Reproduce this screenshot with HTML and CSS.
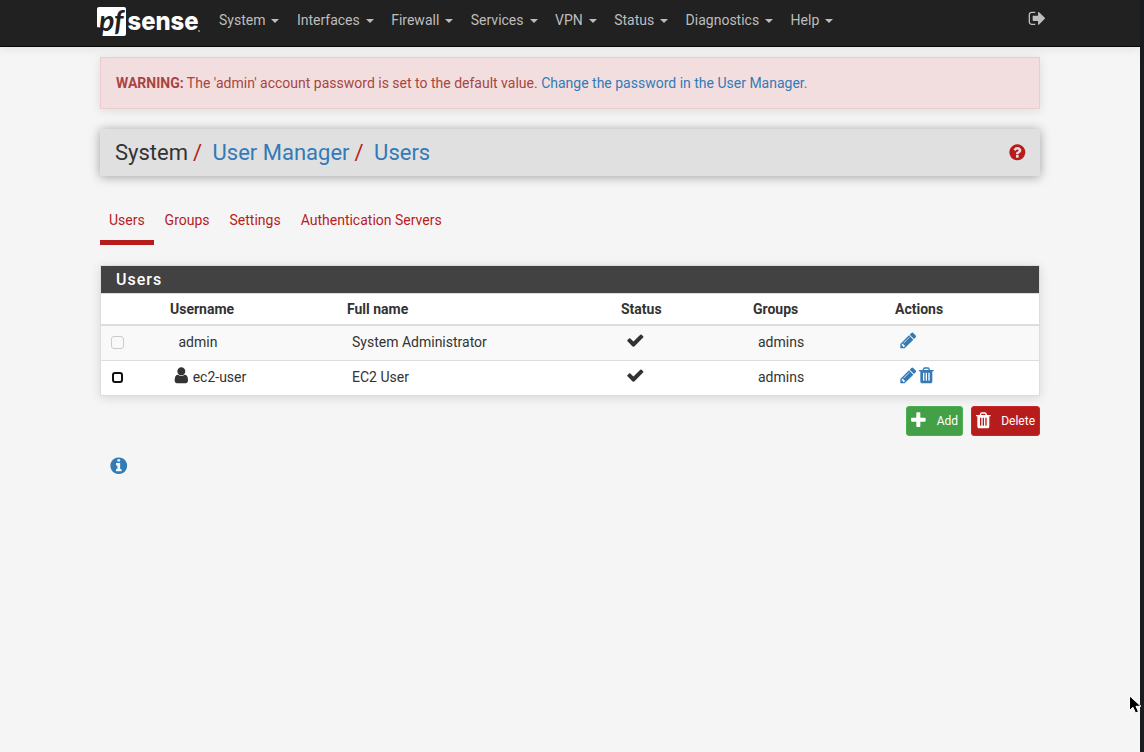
FILE: index.html
```html
<!DOCTYPE html>
<html lang="en">
<head>
<meta charset="utf-8">
<title>System: User Manager: Users</title>
<link rel="stylesheet" href="styles.css">
</head>
<body>
<svg class="sprite" aria-hidden="true">
  <symbol id="pencil" viewBox="0 0 1792 1792"><path d="M491 1536l91-91-235-235-91 91v107h128v128h107zm523-928q0-22-22-22-10 0-17 7l-542 542q-7 7-7 17 0 22 22 22 10 0 17-7l542-542q7-7 7-17zm-54-192l416 416-832 832h-416v-416zm683 96q0 53-37 90l-166 166-416-416 166-165q36-38 90-38 53 0 91 38l235 234q37 39 37 91z"/></symbol>
  <symbol id="check" viewBox="0 0 1792 1792"><path d="M1671 566q0 40-28 68l-724 724-136 136q-28 28-68 28t-68-28l-136-136-362-362q-28-28-28-68t28-68l136-136q28-28 68-28t68 28l294 295 656-657q28-28 68-28t68 28l136 136q28 28 28 68z"/></symbol>
  <symbol id="user" viewBox="0 0 1792 1792"><path d="M1536 1399q0 109-62.500 187t-150.500 78h-854q-88 0-150.500-78t-62.500-187q0-85 8.500-160.500t31.500-152 58.500-131 94-89 134.500-34.500q131 128 313 128t313-128q76 0 134.500 34.500t94 89 58.500 131 31.500 152 8.500 160.500zm-256-887q0 159-112.500 271.500t-271.500 112.500-271.500-112.500-112.500-271.500 112.500-271.500 271.500-112.500 271.500 112.500 112.500 271.500z"/></symbol>
  <symbol id="plus" viewBox="0 0 1792 1792"><path d="M1600 736v192q0 40-28 68t-68 28h-416v416q0 40-28 68t-68 28h-192q-40 0-68-28t-28-68v-416h-416q-40 0-68-28t-28-68v-192q0-40 28-68t68-28h416v-416q0-40 28-68t68-28h192q40 0 68 28t28 68v416h416q40 0 68 28t28 68z"/></symbol>
  <symbol id="info" viewBox="0 0 1792 1792"><path d="M1152 1376v-160q0-14-9-23t-23-9h-96v-512q0-14-9-23t-23-9h-320q-14 0-23 9t-9 23v160q0 14 9 23t23 9h96v320h-96q-14 0-23 9t-9 23v160q0 14 9 23t23 9h448q14 0 23-9t9-23zm-128-896v-160q0-14-9-23t-23-9h-192q-14 0-23 9t-9 23v160q0 14 9 23t23 9h192q14 0 23-9t9-23zm640 416q0 209-103 385.500t-279.500 279.500-385.500 103-385.500-103-279.500-279.500-103-385.500 103-385.500 279.500-279.500 385.500-103 385.500 103 279.500 279.500 103 385.500z"/></symbol>
  <symbol id="question" viewBox="0 0 1792 1792"><path d="M1024 1376v-192q0-14-9-23t-23-9h-192q-14 0-23 9t-9 23v192q0 14 9 23t23 9h192q14 0 23-9t9-23zm256-672q0-88-55.500-163t-138.500-116-170-41q-243 0-371 213-15 24 8 42l132 100q7 6 19 6 16 0 25-12 53-68 86-92 34-24 86-24 48 0 85.500 26t37.500 59q0 38-20 61t-68 45q-63 28-115.500 86.500t-52.500 125.500v36q0 14 9 23t23 9h192q14 0 23-9t9-23q0-19 21.500-49.500t54.500-49.500q32-18 49-28.500t46-35 44.500-48 28-60.500 12.500-81zm384 192q0 209-103 385.500t-279.500 279.500-385.500 103-385.500-103-279.500-279.500-103-385.500 103-385.500 279.500-279.500 385.500-103 385.500 103 279.500 279.500 103 385.500z"/></symbol>
  <symbol id="trash" viewBox="0 0 1792 1792"><path fill-rule="evenodd" d="M672 384h448l-48-117q-7-9-17-11h-317q-10 2-17 11zm928 32v64q0 14-9 23t-23 9h-96v948q0 83-47 143.500t-113 60.500h-832q-66 0-113-58.500t-47-141.500v-952h-96q-14 0-23-9t-9-23v-64q0-14 9-23t23-9h309l70-167q15-37 54-63t79-26h320q40 0 79 26t54 63l70 167h309q14 0 23 9t9 23zM704 1376v-704q0-14-9-23t-23-9h-64q-14 0-23 9t-9 23v704q0 14 9 23t23 9h64q14 0 23-9t9-23zm256 0v-704q0-14-9-23t-23-9h-64q-14 0-23 9t-9 23v704q0 14 9 23t23 9h64q14 0 23-9t9-23zm256 0v-704q0-14-9-23t-23-9h-64q-14 0-23 9t-9 23v704q0 14 9 23t23 9h64q14 0 23-9t9-23z"/></symbol>
  <symbol id="signout" viewBox="0 0 1792 1792"><path d="M704 1440q0 4 1 20t.5 26.500-3 23.500-10 19.500-20.500 6.500h-320q-119 0-203.500-84.500t-84.500-203.500v-704q0-119 84.500-203.500t203.500-84.500h320q13 0 22.500 9.500t9.500 22.500q0 4 1 20t.5 26.500-3 23.500-10 19.500-20.500 6.500h-320q-66 0-113 47t-47 113v704q0 66 47 113t113 47h312l11.500 1 11.500 3 8 5.500 7 9 2 13.500zm928-544q0 26-19 45l-544 544q-19 19-45 19t-45-19-19-45v-288h-448q-26 0-45-19t-19-45v-384q0-26 19-45t45-19h448v-288q0-26 19-45t45-19 45 19l544 544q19 19 19 45z"/></symbol>
</svg>

<div class="page">
  <nav class="navbar">
    <a class="brand">
      <svg width="104" height="32" viewBox="0 0 104 32">
        <rect x="0" y="1" width="29" height="29" rx="2" fill="#fff"/>
        <path d="M0 21L0 31H3L5 22z" fill="#212121"/>
        <text class="logo-pf" x="2" y="24.500" textLength="24.500" lengthAdjust="spacingAndGlyphs">pf</text>
        <text class="logo-sense" x="30.500" y="24" textLength="71" lengthAdjust="spacingAndGlyphs">sense</text>
        <circle cx="102" cy="25" r="1" fill="#999"/>
      </svg>
    </a>
    <ul class="menu">
      <li>System<i class="caret"></i></li>
      <li>Interfaces<i class="caret"></i></li>
      <li>Firewall<i class="caret"></i></li>
      <li>Services<i class="caret"></i></li>
      <li>VPN<i class="caret"></i></li>
      <li>Status<i class="caret"></i></li>
      <li>Diagnostics<i class="caret"></i></li>
      <li>Help<i class="caret"></i></li>
    </ul>
    <svg class="icon logout"><use href="#signout"/></svg>
  </nav>

  <main class="container">
    <div class="alert"><strong>WARNING:</strong> The 'admin' account password is set to the default value. <a>Change the password in the User Manager.</a></div>
    <header class="header">
      <div class="crumbs">System<b>/</b><a>User Manager</a><b>/</b><a>Users</a></div>
      <svg class="icon help"><use href="#question"/></svg>
    </header>
    <ul class="tabs">
      <li class="active">Users</li>
      <li>Groups</li>
      <li>Settings</li>
      <li>Authentication Servers</li>
    </ul>
    <section class="panel">
      <h2>Users</h2>
      <table>
        <colgroup><col class="c-check"><col class="c-name"><col class="c-full"><col class="c-status"><col class="c-groups"><col></colgroup>
        <thead><tr><th></th><th>Username</th><th>Full name</th><th>Status</th><th>Groups</th><th>Actions</th></tr></thead>
        <tbody>
          <tr class="odd">
            <td><span class="box disabled"></span></td>
            <td><span class="cell plain">admin</span></td>
            <td>System Administrator</td>
            <td><span class="cell"><svg class="icon"><use href="#check"/></svg></span></td>
            <td>admins</td>
            <td><span class="cell actions"><svg class="icon"><use href="#pencil"/></svg></span></td>
          </tr>
          <tr>
            <td><span class="box"></span></td>
            <td><span class="cell person"><svg class="icon"><use href="#user"/></svg>ec2-user</span></td>
            <td>EC2 User</td>
            <td><span class="cell"><svg class="icon"><use href="#check"/></svg></span></td>
            <td>admins</td>
            <td><span class="cell actions"><svg class="icon"><use href="#pencil"/></svg><svg class="icon"><use href="#trash"/></svg></span></td>
          </tr>
        </tbody>
      </table>
    </section>
    <div class="buttons">
      <a class="btn add"><svg class="icon"><use href="#plus"/></svg>Add</a>
      <a class="btn delete"><svg class="icon"><use href="#trash"/></svg>Delete</a>
    </div>
    <svg class="icon info"><use href="#info"/></svg>
  </main>
</div>
<svg class="cursor" viewBox="0 0 13 20"><path d="M.5 .8V15.500L4 12.300L6.500 18L9.500 16.800L7 11.300H12z" fill="#000" stroke="#fff"/></svg>
</body>
</html>
```

FILE: styles.css
```css
* { box-sizing: border-box; }
body {
  margin: 0;
  height: 752px;
  overflow: hidden;
  position: relative;
  background: #1b1c21;
  color: #333;
  font: 14px/20px Roboto, sans-serif;
}
.sprite { display: none; }
.page { width: 1140px; height: 752px; background: #f5f5f5; }
ul { list-style: none; margin: 0; padding: 0; display: flex; }
a { color: #337ab7; }
.icon { display: block; flex: none; width: 18.67px; height: 18.67px; fill: currentColor; }

.navbar {
  display: flex;
  align-items: flex-start;
  height: 47px;
  padding: 0 93px 0 97px;
  background: #212121;
  border-bottom: 1px solid #080808;
  box-shadow: 0 2px 10px rgba(0, 0, 0, .08);
  color: #bdbdbd;
}
.brand { width: 122px; padding-top: 6px; }
.brand svg { display: block; overflow: visible; }
.logo-pf { font: italic 700 28px Lato, sans-serif; fill: #212121; }
.logo-sense { font: 800 25.5px Inter, sans-serif; fill: #fff; }
.menu { gap: 17.45px; padding-top: 10px; flex: 1; }
.menu li { display: flex; align-items: center; }
.caret { margin: 1px 0 0 6px; border: 4px solid transparent; border-top-color: currentColor; border-bottom: 0; }
.logout { margin-top: 9px; }

.container { padding: 10px 100px 0; }
.alert {
  height: 52px;
  padding: 15px;
  background: #f2dede;
  border: 1px solid #ebccd1;
  color: #a94442;
  box-shadow: 0 2px 10px rgba(0, 0, 0, .1);
}
.header {
  display: flex;
  align-items: center;
  justify-content: space-between;
  height: 47px;
  margin-top: 20px;
  padding: 0 13px 0 15px;
  background: #e0e0e0;
  box-shadow: 0 1px 10px rgba(0, 0, 0, .35);
}
.crumbs { font-size: 22px; line-height: 24px; padding-top: 1px; }
.crumbs b { font-weight: 400; color: #b71c1c; margin: 0 10.5px 0 5px; }
.help { color: #b71c1c; }
.tabs { margin-top: 34px; height: 35px; color: #b71c1c; }
.tabs li { height: 35px; padding: 0 10px; }
.tabs .active { width: 54px; margin-right: .6px; padding: 0 0 0 9px; border-bottom: 5px solid #b71c1c; }

.panel {
  margin-top: 20px;
  background: #fff;
  border: 1px solid #ddd;
  box-shadow: 0 2px 10px rgba(0, 0, 0, .12);
}
.panel h2 {
  margin: 0;
  height: 27px;
  padding-left: 15px;
  background: #424242;
  color: #fff;
  font-size: 16px;
  font-weight: 500;
  line-height: 27px;
  letter-spacing: 1px;
}
table { width: 100%; table-layout: fixed; border-collapse: separate; border-spacing: 0; }
.c-check { width: 64px; }
.c-name { width: 177px; }
.c-full { width: 274px; }
.c-status { width: 132px; }
.c-groups { width: 142px; }
th { height: 33px; padding: 0 0 0 5px; text-align: left; border-top: 1px solid #ddd; border-bottom: 2px solid #ddd; }
td { height: 34px; padding: 0 0 2px 10px; }
tbody tr + tr td { height: 35px; border-top: 1px solid #ddd; }
.odd { background: #f9f9f9; }
.cell { display: flex; align-items: center; }
.cell .icon { margin-top: -3px; }
.plain { padding-left: 3.5px; }
.person { margin-left: -2.6px; gap: 1.6px; }
.box { display: block; width: 11px; height: 11px; margin-left: 1px; border: 2px solid #111; border-radius: 3px; background: #fff; }
.disabled { width: 13px; height: 13px; margin-left: 0; border: 1px solid #ccc; background: #f9f9f9; }
.actions { color: #337ab7; margin-left: -1.5px; }

.buttons { display: flex; justify-content: flex-end; gap: 8px; margin-top: 10px; }
.btn {
  display: flex;
  align-items: center;
  justify-content: space-between;
  height: 30px;
  padding: 0 4px 0 2px;
  border: 1px solid;
  border-radius: 3px;
  color: #fff;
  font-size: 12px;
}
.add { width: 57px; background: #43a047; border-color: #4caf50; }
.delete { width: 69px; background: #b71c1c; border-color: #c62828; }
.btn .icon { color: #fff; margin-top: -1px; }
.info { margin: 20px 0 0 9px; width: 19.5px; height: 19.5px; color: #337ab7; }
.cursor { position: absolute; left: 1129px; top: 695px; width: 13px; height: 20px; }
```
